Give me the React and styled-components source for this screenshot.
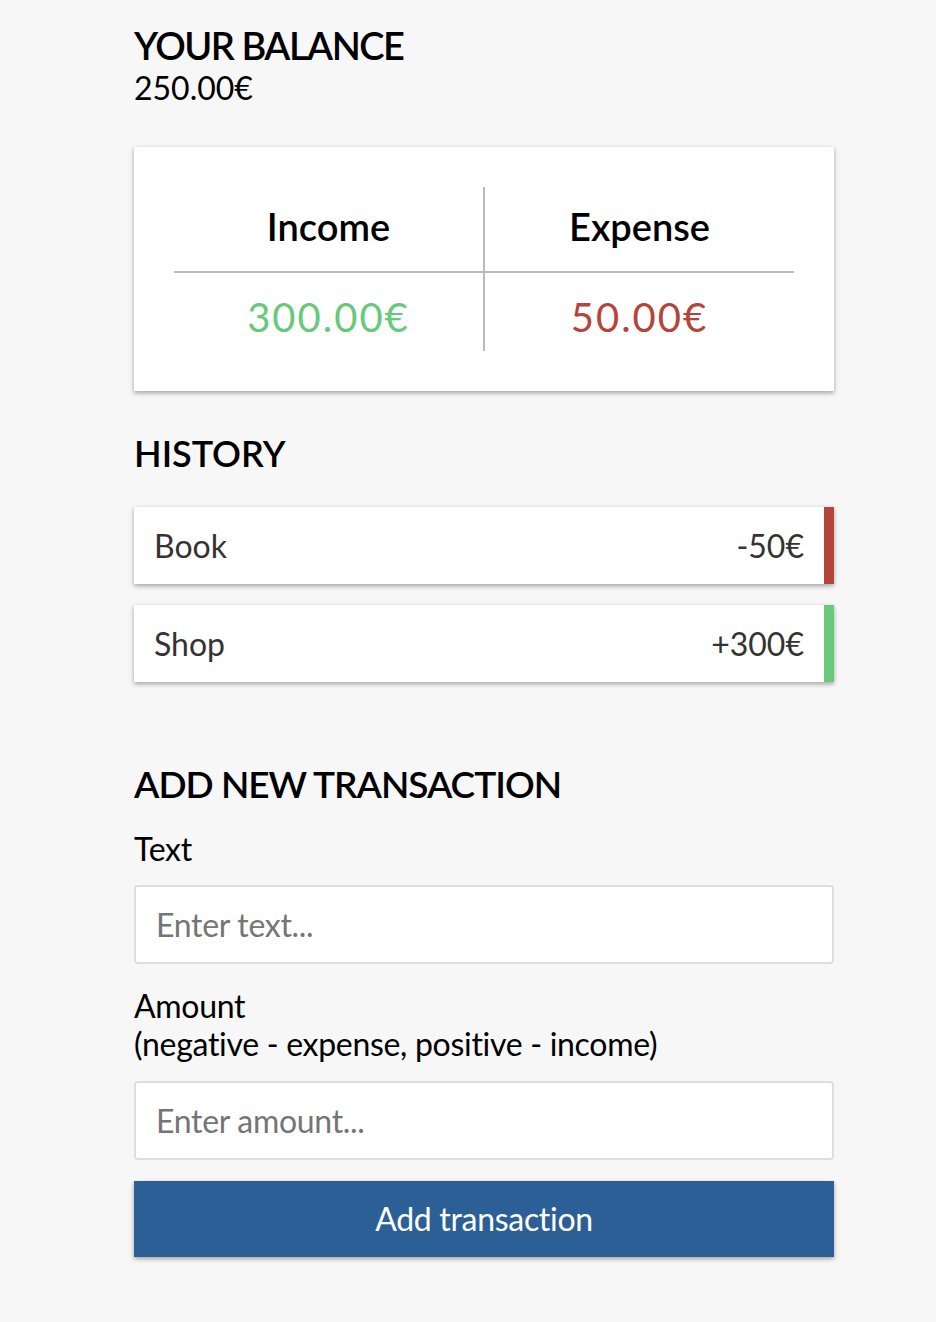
import React, { useState } from 'react';
import styled, { createGlobalStyle } from 'styled-components';

const GlobalStyle = createGlobalStyle`
  * { box-sizing: border-box; }
  body {
    margin: 0;
    background-color: #f7f7f7;
    font-family: 'Lato', 'Liberation Sans', sans-serif;
    font-variant-ligatures: none;
  }
`;

const shadow = '0 2px 6px rgba(0, 0, 0, 0.12), 0 2px 4px rgba(0, 0, 0, 0.24)';

const Page = styled.div`
  min-height: 1322px;
  padding: 23px 0 60px 134px;
`;

const Container = styled.div`
  width: 700px;
`;

const Heading = styled.h2`
  margin: ${props => props.$margin || '0'};
  font-size: ${props => props.$size || 38}px;
  font-weight: 600;
  line-height: 1.2;
  color: #000;
  text-transform: uppercase;
  letter-spacing: ${props => props.$spacing || 0}px;
`;

const Balance = styled.p`
  margin: 0;
  font-size: 32px;
  line-height: 1.2;
  color: #000;
`;

const SummaryCard = styled.div`
  margin-top: 40px;
  background-color: #fff;
  box-shadow: ${shadow};
  padding: 40px;
  display: flex;
`;

const SummaryColumn = styled.div`
  flex: 1;
  text-align: center;
  border-right: ${props => props.$divider ? '2px solid #bbb' : 'none'};
`;

const SummaryLabel = styled.div`
  padding: 17px 0 21.4px;
  font-size: 38px;
  font-weight: 600;
  line-height: 1.2;
  color: #000;
  border-bottom: 2px solid #bbb;
`;

const Money = styled.div`
  padding: 20px 0 10px;
  font-size: 40px;
  line-height: 1.2;
  letter-spacing: 2px;
  color: ${props => props.$type === 'plus' ? '#68c97a' : '#b5443a'};
`;

const List = styled.ul`
  list-style: none;
  margin: 32px 0 0;
  padding: 0;
  display: flex;
  flex-direction: column;
  gap: 21px;
`;

const ListItem = styled.li`
  height: 77px;
  display: flex;
  align-items: center;
  justify-content: space-between;
  padding: 0 20px;
  background-color: #fff;
  box-shadow: ${shadow};
  border-right: 10px solid ${props => props.$type === 'plus' ? '#68c97a' : '#b5443a'};
  font-size: 32px;
  color: #333;
`;

const Form = styled.form`
  display: flex;
  flex-direction: column;
`;

const Label = styled.label`
  margin: 23px 0 17px;
  font-size: 32px;
  line-height: 1.2;
  letter-spacing: -0.3px;
  color: #000;
`;

const Input = styled.input`
  width: 100%;
  height: 79px;
  padding: 0 20px;
  border: 2px solid #dedede;
  border-radius: 4px;
  background-color: #fff;
  font-family: 'Lato', 'Liberation Sans', sans-serif;
  font-size: 32px;
  letter-spacing: -0.3px;
  color: #333;
  outline: none;
  &::placeholder { color: #757575; }
`;

const Button = styled.button`
  margin-top: 21px;
  width: 100%;
  height: 76px;
  border: 0;
  background-color: #2c5f95;
  box-shadow: ${shadow};
  color: #fff;
  font-family: 'Lato', 'Liberation Sans', sans-serif;
  font-size: 32px;
  letter-spacing: -0.3px;
  cursor: pointer;
`;

const transactions = [
  { id: 1, text: 'Book', amount: -50 },
  { id: 2, text: 'Shop', amount: 300 },
];

function App() {
  const [text, setText] = useState('');
  const [amount, setAmount] = useState('');

  return (
    <Page>
      <GlobalStyle />
      <Container>
        <Heading $spacing={-1.5}>Your Balance</Heading>
        <Balance>250.00€</Balance>

        <SummaryCard>
          <SummaryColumn $divider>
            <SummaryLabel>Income</SummaryLabel>
            <Money $type="plus">300.00€</Money>
          </SummaryColumn>
          <SummaryColumn>
            <SummaryLabel>Expense</SummaryLabel>
            <Money $type="minus">50.00€</Money>
          </SummaryColumn>
        </SummaryCard>

        <Heading $size={36} $margin="41px 0 0">History</Heading>
        <List>
          {transactions.map(t => (
            <ListItem key={t.id} $type={t.amount < 0 ? 'minus' : 'plus'}>
              <span>{t.text}</span>
              <span>{t.amount < 0 ? '-' : '+'}{Math.abs(t.amount)}€</span>
            </ListItem>
          ))}
        </List>

        <Heading $size={37} $margin="80px 0 0" $spacing={-1}>Add new transaction</Heading>
        <Form onSubmit={e => e.preventDefault()}>
          <Label htmlFor="text">Text</Label>
          <Input id="text" type="text" placeholder="Enter text..." value={text} onChange={e => setText(e.target.value)} />
          <Label htmlFor="amount">
            Amount <br />
            (negative - expense, positive - income)
          </Label>
          <Input id="amount" type="number" placeholder="Enter amount..." value={amount} onChange={e => setAmount(e.target.value)} />
          <Button type="submit">Add transaction</Button>
        </Form>
      </Container>
    </Page>
  );
}

export default App;
